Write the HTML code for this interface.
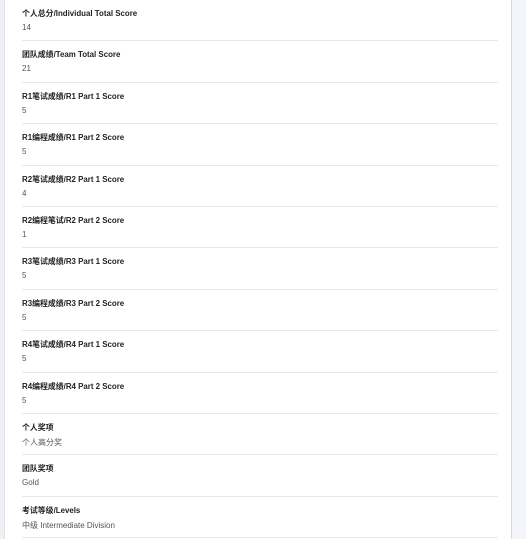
<html><head><style>
body{margin:0;width:526px;height:539px;overflow:hidden;background:#f4f5fa;font-family:"Liberation Sans","Noto Sans CJK SC",sans-serif;}
.l{position:absolute;left:0;top:0;width:4px;height:539px;background:#eef0f5;}
.c{position:absolute;left:4px;top:0;width:506px;height:539px;background:#fff;border-left:1px solid #e2e3e8;border-right:1px solid #d8d9de;}
.r{position:absolute;left:17px;width:476px;height:41.4px;border-bottom:1px solid #e8e8e8;box-sizing:border-box;}
.t{position:absolute;top:8px;font-size:7.9px;font-weight:bold;color:#222;}
.v{position:absolute;top:23px;font-size:8px;color:#555;}
</style></head><body><div class="l"></div><div class="c">
<div class="r" style="top:0"><div class="t">个人总分/Individual Total Score</div><div class="v">14</div></div>
<div class="r" style="top:41.4px"><div class="t">团队成绩/Team Total Score</div><div class="v">21</div></div>
<div class="r" style="top:82.8px"><div class="t">R1笔试成绩/R1 Part 1 Score</div><div class="v">5</div></div>
<div class="r" style="top:124.2px"><div class="t">R1编程成绩/R1 Part 2 Score</div><div class="v">5</div></div>
<div class="r" style="top:165.6px"><div class="t">R2笔试成绩/R2 Part 1 Score</div><div class="v">4</div></div>
<div class="r" style="top:207px"><div class="t">R2编程笔试/R2 Part 2 Score</div><div class="v">1</div></div>
<div class="r" style="top:248.4px"><div class="t">R3笔试成绩/R3 Part 1 Score</div><div class="v">5</div></div>
<div class="r" style="top:289.8px"><div class="t">R3编程成绩/R3 Part 2 Score</div><div class="v">5</div></div>
<div class="r" style="top:331.2px"><div class="t">R4笔试成绩/R4 Part 1 Score</div><div class="v">5</div></div>
<div class="r" style="top:372.6px"><div class="t">R4编程成绩/R4 Part 2 Score</div><div class="v">5</div></div>
<div class="r" style="top:414px"><div class="t">个人奖项</div><div class="v">个人高分奖</div></div>
<div class="r" style="top:455.4px"><div class="t">团队奖项</div><div class="v">Gold</div></div>
<div class="r" style="top:496.8px"><div class="t">考试等级/Levels</div><div class="v">中级 Intermediate Division</div></div>
</div></body></html>
